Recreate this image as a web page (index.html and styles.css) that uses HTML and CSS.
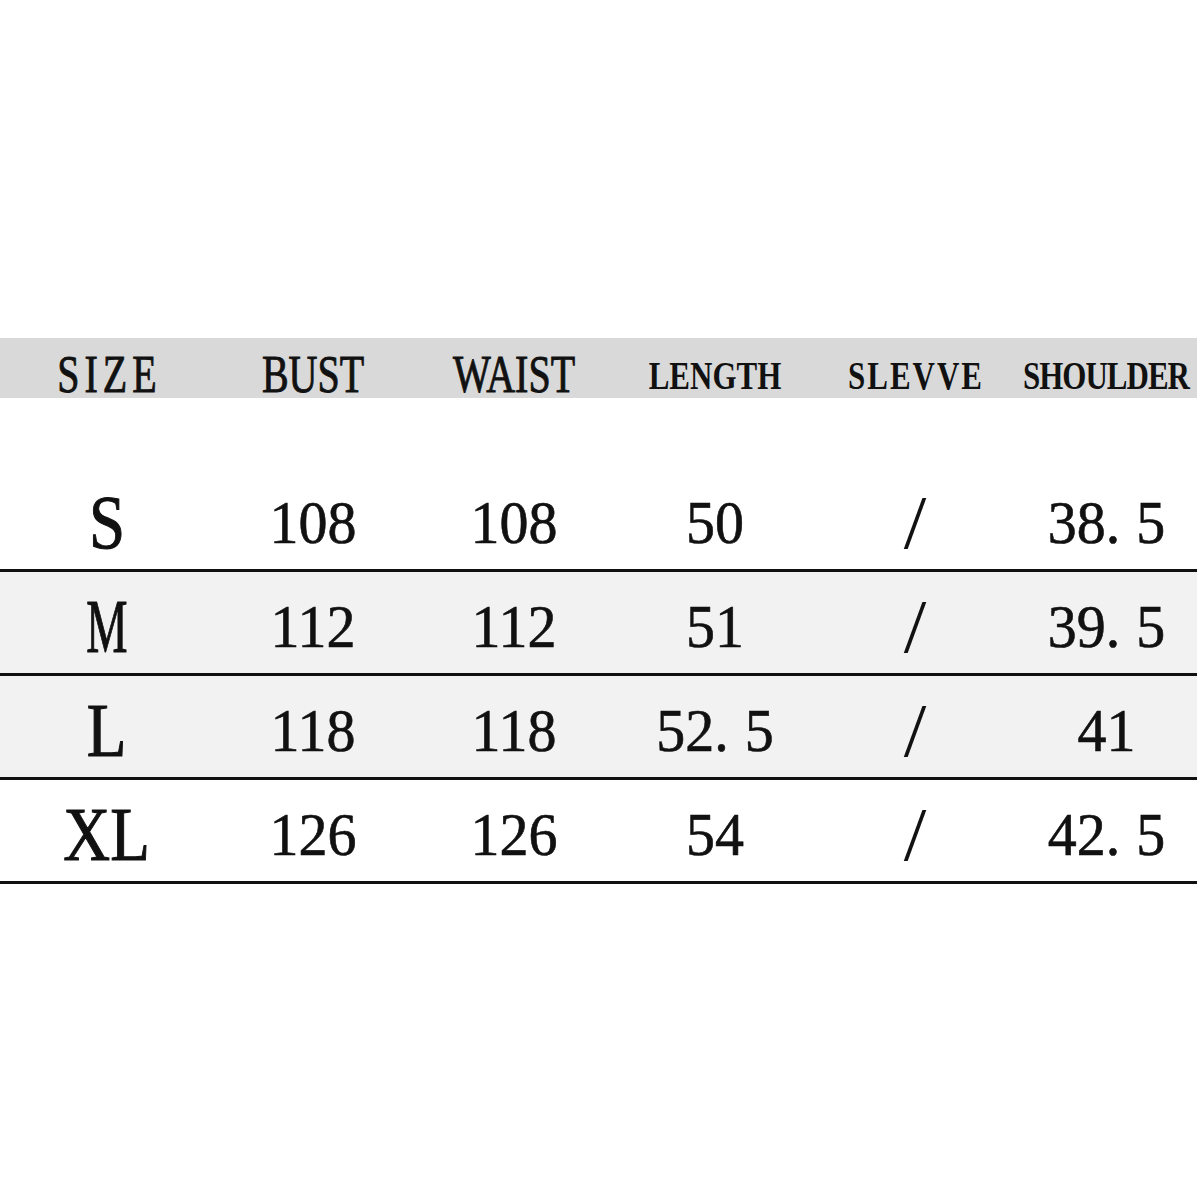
FILE: index.html
```html
<!DOCTYPE html>
<html>
<head>
<meta charset="utf-8">
<link rel="stylesheet" href="styles.css">
</head>
<body>
<div class="chart">
  <div class="head">
    <div class="cell"><span class="h1 h-size">SIZE</span></div>
    <div class="cell"><span class="h1">BUST</span></div>
    <div class="cell"><span class="h1">WAIST</span></div>
    <div class="cell"><span class="h2">LENGTH</span></div>
    <div class="cell"><span class="h2 h-slevve">SLEVVE</span></div>
    <div class="cell"><span class="h2 h-shoulder">SHOULDER</span></div>
  </div>
  <div class="gap"></div>
  <div class="row">
    <div class="cell"><span class="sz">S</span></div>
    <div class="cell"><span class="num">108</span></div>
    <div class="cell"><span class="num">108</span></div>
    <div class="cell"><span class="num">50</span></div>
    <div class="cell"><span class="slash">/</span></div>
    <div class="cell"><span class="num">38<span class="dot">.</span>5</span></div>
  </div>
  <div class="row alt">
    <div class="cell"><span class="sz sz-m">M</span></div>
    <div class="cell"><span class="num">112</span></div>
    <div class="cell"><span class="num">112</span></div>
    <div class="cell"><span class="num">51</span></div>
    <div class="cell"><span class="slash">/</span></div>
    <div class="cell"><span class="num">39<span class="dot">.</span>5</span></div>
  </div>
  <div class="row alt">
    <div class="cell"><span class="sz">L</span></div>
    <div class="cell"><span class="num">118</span></div>
    <div class="cell"><span class="num">118</span></div>
    <div class="cell"><span class="num">52<span class="dot">.</span>5</span></div>
    <div class="cell"><span class="slash">/</span></div>
    <div class="cell"><span class="num">41</span></div>
  </div>
  <div class="row">
    <div class="cell"><span class="sz">XL</span></div>
    <div class="cell"><span class="num">126</span></div>
    <div class="cell"><span class="num">126</span></div>
    <div class="cell"><span class="num">54</span></div>
    <div class="cell"><span class="slash">/</span></div>
    <div class="cell"><span class="num">42<span class="dot">.</span>5</span></div>
  </div>
</div>
</body>
</html>
```
FILE: styles.css
```css
html, body {
  margin: 0;
  padding: 0;
  background: #ffffff;
}

body {
  font-family: "Liberation Serif", "Times New Roman", serif;
  color: #111111;
}

.chart {
  padding-top: 338px;
  width: 1197px;
}

.head,
.row {
  display: grid;
  grid-template-columns: 214px 198px 204px 198px 202px 181px;
  align-items: center;
}

.head {
  height: 60px;
  box-sizing: border-box;
  padding-top: 14px;
  background: #d9d9d9;
}

.gap {
  height: 70px;
}

.row {
  height: 104px;
  box-sizing: border-box;
  padding-top: 8px;
  border-bottom: 3px solid #111111;
}

.row.alt {
  background: #f2f2f2;
}

.cell {
  display: flex;
  justify-content: center;
  align-items: center;
}

.h1,
.h2,
.sz,
.num,
.slash {
  display: inline-block;
  line-height: 1;
  white-space: nowrap;
}

.h1 {
  font-size: 40px;
  transform: scaleY(1.3);
  -webkit-text-stroke: 0.7px #111111;
}

.h-size {
  letter-spacing: 5px;
  margin-right: -5px;
}

.h2 {
  font-size: 31px;
  font-weight: bold;
  transform: scaleY(1.27);
}

.h-slevve {
  letter-spacing: 2px;
  margin-right: -2px;
}

.h-shoulder {
  letter-spacing: -1px;
  margin-right: 1px;
}

.sz {
  font-size: 58px;
  transform: scale(1.12, 1.33);
  -webkit-text-stroke: 0.8px #111111;
}

.sz-m {
  transform: scale(0.8, 1.33);
}

.num {
  font-size: 58px;
  transform: scaleY(1.05);
  -webkit-text-stroke: 0.6px #111111;
}

.dot {
  letter-spacing: 16px;
}

.slash {
  font-size: 58px;
  transform: scale(1.4, 1.3);
}
```
